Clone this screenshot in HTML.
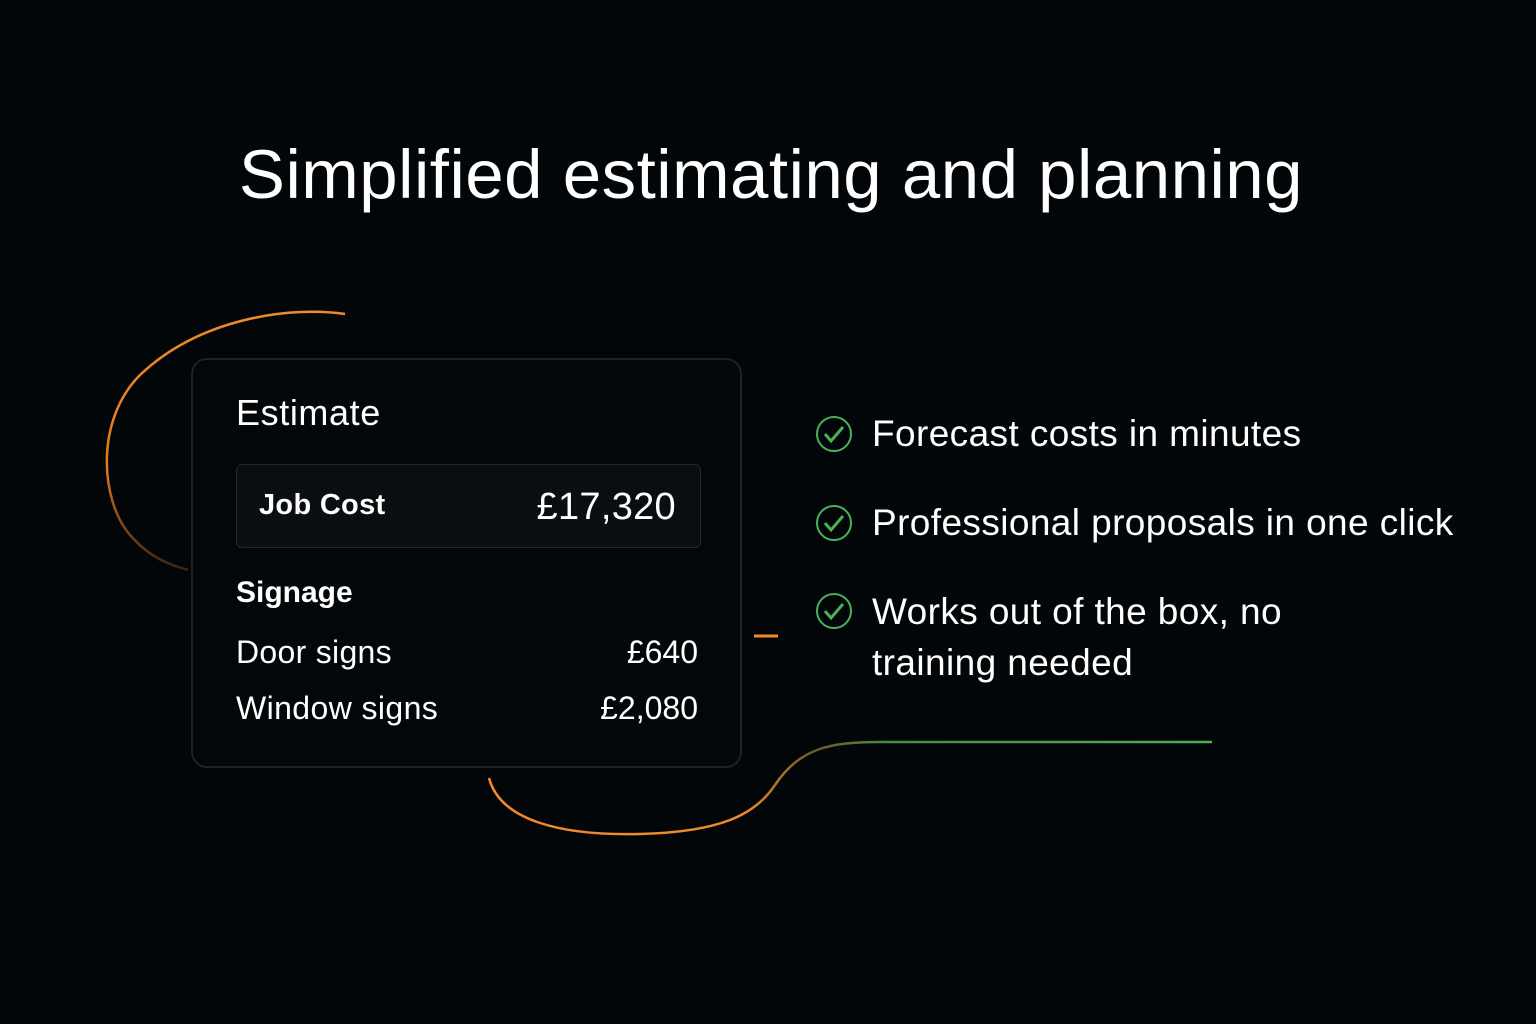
<!DOCTYPE html>
<html><head><meta charset="utf-8"><style>
html,body{margin:0;padding:0;background:#030608;}
body{width:1536px;height:1024px;position:relative;overflow:hidden;font-family:"Liberation Sans",sans-serif;color:#fff;}
.t{position:absolute;white-space:nowrap;}
.card{position:absolute;left:191px;top:358px;width:547px;height:406px;border:2px solid #1e2224;border-radius:16px;background:#040709;}
.box{position:absolute;left:236px;top:464px;width:463px;height:82px;border:1.5px solid #23282b;border-radius:6px;background:#0a0e10;}
.r{font-size:37px;letter-spacing:0.4px;}
</style></head><body>
<svg width="1536" height="1024" style="position:absolute;left:0;top:0">
<defs>
<linearGradient id="g1" x1="0" y1="0" x2="0" y2="1"><stop offset="0" stop-color="#f08a2a"/><stop offset="0.6" stop-color="#e07a20"/><stop offset="1" stop-color="#3a2410"/></linearGradient>
<linearGradient id="g2" x1="489" y1="0" x2="1212" y2="0" gradientUnits="userSpaceOnUse"><stop offset="0" stop-color="#f08a2a"/><stop offset="0.35" stop-color="#f08a2a"/><stop offset="0.45" stop-color="#6b5a2a"/><stop offset="0.55" stop-color="#4a8a45"/><stop offset="1" stop-color="#4caf5a"/></linearGradient>
</defs>
<path d="M345 314 C290 306 200 318 140 375 C95 420 100 500 130 535 C150 558 170 565 188 570" fill="none" stroke="url(#g1)" stroke-width="2.5"/>
<path d="M489 778 C500 820 560 836 640 834 C720 832 755 815 775 785 C800 748 830 742 880 742 L1212 742" fill="none" stroke="url(#g2)" stroke-width="2.5"/>
<line x1="754" y1="636" x2="778" y2="636" stroke="#f08a2a" stroke-width="3"/>
<g fill="none" stroke="#4caf5a" stroke-width="2">
<circle cx="834" cy="434" r="17"/><path d="M825 434 L831 441 L843 427" stroke-width="3"/>
<circle cx="834" cy="523" r="17"/><path d="M825 523 L831 530 L843 516" stroke-width="3"/>
<circle cx="834" cy="611" r="17"/><path d="M825 611 L831 618 L843 604" stroke-width="3"/>
</g>
</svg>
<div class="t" style="left:0;width:1542px;text-align:center;top:135px;font-size:69px;letter-spacing:0.5px;">Simplified estimating and planning</div>
<div class="card"></div>
<div class="box"></div>
<div class="t" style="left:236px;top:392px;font-size:36px;letter-spacing:0.6px;">Estimate</div>
<div class="t" style="left:259px;top:489px;font-size:29px;font-weight:bold;letter-spacing:0.3px;">Job Cost</div>
<div class="t" style="right:860px;top:486px;font-size:38px;letter-spacing:0.3px;">£17,320</div>
<div class="t" style="left:236px;top:576px;font-size:30px;font-weight:bold;">Signage</div>
<div class="t" style="left:236px;top:634px;font-size:32px;letter-spacing:0.3px;">Door signs</div>
<div class="t" style="right:838px;top:634px;font-size:32px;">£640</div>
<div class="t" style="left:236px;top:690px;font-size:32px;letter-spacing:0.4px;">Window signs</div>
<div class="t" style="right:838px;top:690px;font-size:32px;">£2,080</div>
<div class="t r" style="left:872px;top:413px;">Forecast costs in minutes</div>
<div class="t r" style="left:872px;top:502px;">Professional proposals in one click</div>
<div class="t r" style="left:872px;top:591px;">Works out of the box, no</div>
<div class="t r" style="left:872px;top:642px;">training needed</div>
</body></html>
